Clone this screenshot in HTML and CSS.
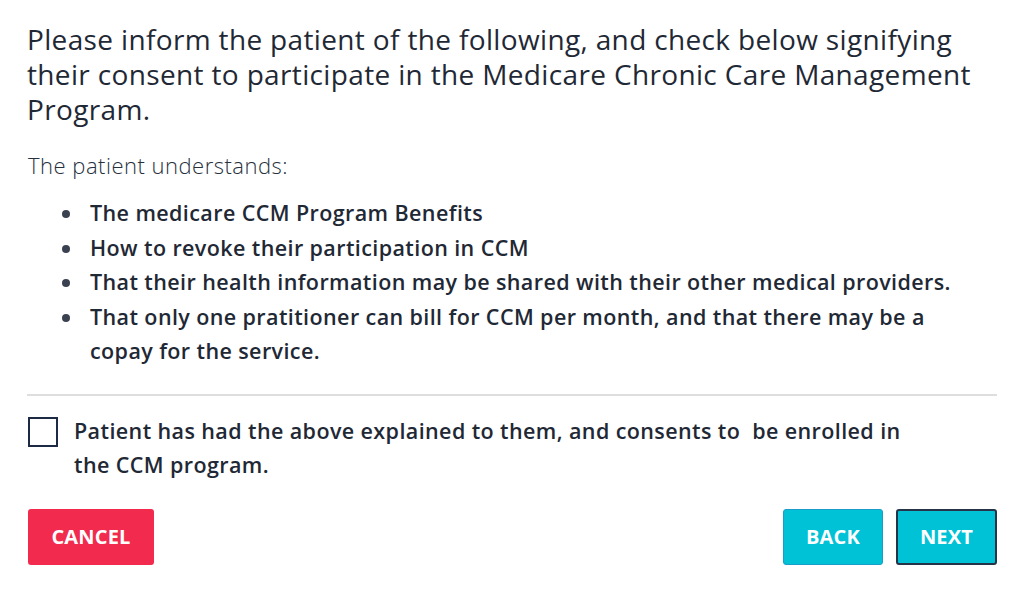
FILE: index.html
```html
<!DOCTYPE html>
<html lang="en">
<head>
    <meta charset="UTF-8">
    <meta name="viewport" content="width=device-width, initial-scale=1.0">
    <title>CCM Consent</title>
    <link rel="stylesheet" href="styles.css">
</head>
<body>
    <div class="consent">
        <h2 class="intro">Please inform the patient of the following, and check below signifying their consent to participate in the Medicare Chronic Care Management Program.</h2>
        <p class="lead">The patient understands:</p>
        <ul class="points">
            <li>The medicare CCM Program Benefits</li>
            <li>How to revoke their participation in CCM</li>
            <li>That their health information may be shared with their other medical providers.</li>
            <li>That only one pratitioner can bill for CCM per month, and that there may be a copay for the service.</li>
        </ul>
        <hr class="divider">
        <label class="agree">
            <span class="box"></span>
            <span class="agree-text">Patient has had the above explained to them, and consents to &nbsp;be enrolled in the CCM program.</span>
        </label>
        <div class="actions">
            <button class="btn cancel">CANCEL</button>
            <div class="nav">
                <button class="btn back">BACK</button>
                <button class="btn next">NEXT</button>
            </div>
        </div>
    </div>
</body>
</html>
```

FILE: styles.css
```css
body {
    margin: 0;
    background: #ffffff;
    font-family: 'Open Sans', sans-serif;
    color: #1f2935;
}

.consent {
    padding: 22px 28px 0 27px;
}

.intro {
    font-size: 28px;
    font-weight: 400;
    letter-spacing: 0.35px;
    line-height: 35px;
    margin: 0 0 24px 0;
    max-width: 960px;
}

.lead {
    font-size: 22px;
    font-weight: 300;
    letter-spacing: 0.5px;
    margin: 0 0 17px 1px;
    line-height: 28px;
    color: #27313d;
}

.points {
    margin: 0;
    padding-left: 57px;
    font-size: 21.5px;
    font-weight: 600;
    letter-spacing: 0.4px;
    line-height: 34.5px;
    max-width: 871px;
}

.points li {
    padding-left: 6px;
}

.points li::marker {
    color: #3a4150;
}

.divider {
    border: none;
    border-top: 2px solid #dedede;
    margin: 25px 0 18px 0;
}

.agree {
    display: flex;
    align-items: flex-start;
    gap: 16px;
    font-size: 21.5px;
    font-weight: 600;
    letter-spacing: 0.4px;
    line-height: 34px;
}

.box {
    flex: none;
    width: 26px;
    height: 26px;
    border: 2px solid #1c2a45;
    margin: 3px 0 0 1px;
}

.agree-text {
    max-width: 840px;
}

.actions {
    display: flex;
    justify-content: space-between;
    margin-top: 27px;
}

.nav {
    display: flex;
    gap: 13px;
}

.btn {
    height: 56px;
    border: 1px solid transparent;
    border-radius: 3px;
    color: #ffffff;
    font-family: inherit;
    font-size: 20px;
    font-weight: 700;
    letter-spacing: 0.2px;
    padding: 0;
    cursor: pointer;
}

.cancel {
    background: #f12a4e;
    width: 126px;
    margin-left: 1px;
}

.back {
    background: #00c2d6;
    border-color: #1a9dc8;
    width: 100px;
}

.next {
    background: #00c2d6;
    border: 2px solid #263447;
    width: 101px;
}
```
